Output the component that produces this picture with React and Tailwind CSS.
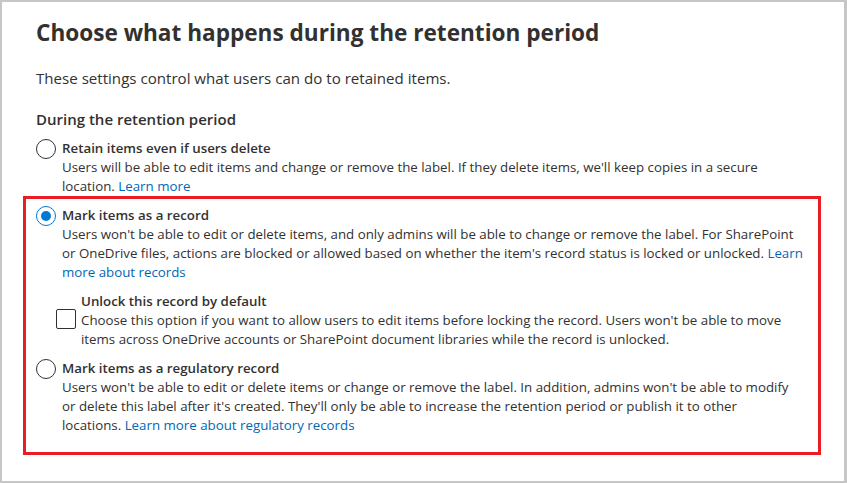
export default function App() {
  return (
    <main className="w-[847px] h-[483px] bg-white border-[#c6c6c6] border-t-2 border-l-2 border-b-2 border-r-[3px] font-['Open_Sans',sans-serif] text-[#323130] overflow-hidden">
      <div className="pl-[34px] pr-[23px] pt-[15px]">
        <h1 className="text-[22.6px] leading-[32px] font-bold whitespace-nowrap">
          Choose what happens during the retention period
        </h1>
        <p className="mt-[18px] text-[15.1px] leading-[22px] whitespace-nowrap">
          These settings control what users can do to retained items.
        </p>
        <h2 className="mt-[19px] text-[15px] leading-[22px] font-semibold whitespace-nowrap">
          During the retention period
        </h2>
      </div>

      <div className="pl-[34px] pt-[9px]">
        <Option
          title="Retain items even if users delete"
          lines={[
            "Users will be able to edit items and change or remove the label. If they delete items, we'll keep copies in a secure",
            "location.",
          ]}
          link="Learn more"
        />
      </div>

      <section className="ml-[21px] mr-[23px] border-[3px] border-[#ec1c24] pl-[10px] pt-[7px] pb-[17px] flex flex-col gap-[10px]">
        <Option
          checked
          title="Mark items as a record"
          lines={[
            "Users won't be able to edit or delete items, and only admins will be able to change or remove the label. For SharePoint",
            "or OneDrive files, actions are blocked or allowed based on whether the item's record status is locked or unlocked.",
          ]}
          link={["Learn", "more about records"]}
        />

        <div className="flex items-start gap-[5px] pl-[20px]">
          <span className="mt-[17px] w-[20px] h-[20px] shrink-0 border border-[#323130] rounded-[2px] bg-white" />
          <div className="text-[13.3px] leading-[19px] whitespace-nowrap">
            <div className="font-semibold">Unlock this record by default</div>
            <div>
              Choose this option if you want to allow users to edit items before locking the record. Users won't be able to move
            </div>
            <div>
              items across OneDrive accounts or SharePoint document libraries while the record is unlocked.
            </div>
          </div>
        </div>

        <Option
          title="Mark items as a regulatory record"
          lines={[
            "Users won't be able to edit or delete items or change or remove the label. In addition, admins won't be able to modify",
            "or delete this label after it's created. They'll only be able to increase the retention period or publish it to other",
            "locations.",
          ]}
          link="Learn more about regulatory records"
        />
      </section>
    </main>
  );
}

function Option({ checked, title, lines, link }) {
  const last = lines.length - 1;
  const split = Array.isArray(link);
  return (
    <div className="flex items-start gap-[6px]">
      <span
        className={
          checked
            ? "w-[20px] h-[20px] shrink-0 rounded-full border border-[#0078d4] flex items-center justify-center"
            : "w-[20px] h-[20px] shrink-0 rounded-full border border-[#323130]"
        }
      >
        {checked && <span className="w-[10px] h-[10px] rounded-full bg-[#0078d4]" />}
      </span>
      <div className="text-[13.3px] leading-[19px] whitespace-nowrap">
        <div className="font-semibold">{title}</div>
        {lines.map((line, i) => (
          <div key={i}>
            {line}
            {i === last && (
              <>
                {" "}
                <a href="#" className="text-[#0067b8]">{split ? link[0] : link}</a>
              </>
            )}
          </div>
        ))}
        {split && (
          <div>
            <a href="#" className="text-[#0067b8]">{link[1]}</a>
          </div>
        )}
      </div>
    </div>
  );
}
